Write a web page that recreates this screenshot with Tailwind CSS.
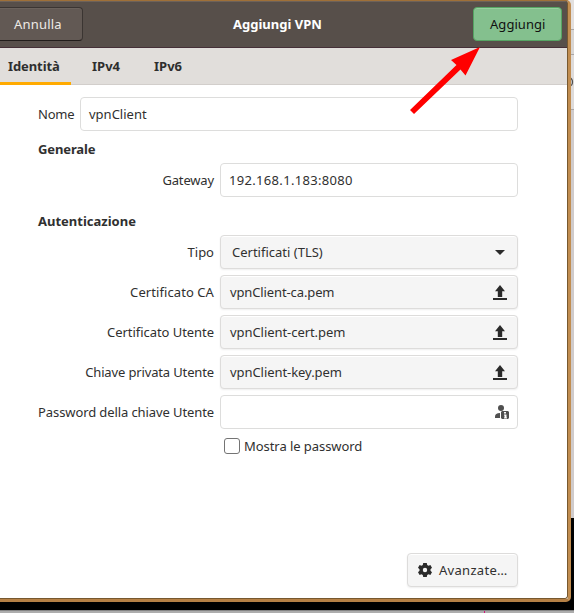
<!DOCTYPE html>
<html lang="it">
<head>
<meta charset="utf-8">
<title>Aggiungi VPN</title>
<script src="https://cdn.jsdelivr.net/npm/@tailwindcss/browser@4"></script>
</head>
<body class="relative h-[613px] w-[574px] overflow-hidden bg-black font-['Noto_Sans',sans-serif] text-[13px] leading-[18px] text-[#303030]">
<!-- desktop behind the dialog -->
<div class="absolute top-0 right-0 h-[518px] w-[8px] overflow-hidden bg-[#d0cbcb]">
  <div class="h-[30px] border-b border-[#aaa6a5] bg-[#e3e0df]"></div>
  <div class="h-[25px] border-b border-[#aaa6a5] bg-[#d9d6d4]"></div>
  <div class="h-[55px] border-b border-[#aaa6a5] bg-[#dedbda]"></div>
  <svg class="absolute top-[77px] left-0" width="8" height="10"><ellipse cx="3.500" cy="5" rx="3" ry="4" fill="none" stroke="#505050" stroke-width="1.300"/></svg>
</div>
<div class="absolute bottom-0 left-0 h-[3px] w-full border-t border-[#858585] bg-[#adadad]"><div class="ml-[484px] h-[2px] w-px bg-[#d4147a]"></div></div>

<main class="relative flex h-[602px] w-[571px] flex-col overflow-hidden rounded-r-[5px] border-t border-r-[3px] border-b-[3px] border-t-[#9f7038] border-r-[#c18d50] border-b-[#b58045] bg-white">
  <div class="pointer-events-none absolute inset-0 z-10 rounded-r-[3px] border-r border-b border-[#77582f]"></div>
  <header class="flex h-[47px] shrink-0 items-start border-t border-b border-t-[#6d625a] border-b-[#453038] bg-[#574f4a] pt-[5px]">
    <button class="h-[34px] w-[83px] rounded-r-[4px] border border-l-0 border-[#3b3532] border-b-[#211d1b] bg-[#625954] pl-[14px] text-left text-[#eeeae6] shadow-[inset_0_1px_#6b625c]"><span class="tracking-[0.2px]">Annulla</span></button>
    <h1 class="ml-[150px] w-[240px] pt-[8px] font-bold whitespace-nowrap text-white"><span>Aggiungi VPN</span></h1>
    <button class="h-[34px] w-[89px] rounded-[4px] border border-[#55a463] bg-[#84c08e] pl-[16px] text-left text-[#111] shadow-[inset_0_1px_#98ce9f]"><span class="tracking-[0.050px]">Aggiungi</span></button>
  </header>
  <nav class="flex h-[37px] shrink-0 border-b border-[#d2cecb] bg-[#e1dedb] font-bold text-[#2e2e2e]">
    <div class="-mb-px h-[37px] w-[71px] border-b-[3px] border-[#ffaa00] pt-[9px] pl-[8px]"><span class="tracking-[-0.1px]">Identità</span></div>
    <div class="w-[62px] pt-[9px] pl-[21px]"><span>IPv4</span></div>
    <div class="pt-[9px] pl-[21px]"><span>IPv6</span></div>
  </nav>
  <section class="flex flex-1 flex-col pt-[12px] pl-[38px]">
    <div class="flex h-[34px] items-center"><label class="w-[42px]"><span class="tracking-[-0.25px]">Nome</span></label><div class="flex h-[34px] w-[438px] items-center rounded-[4px] border border-[#dddddc] pl-[8px]"><span>vpnClient</span></div></div>
    <h2 class="mt-[9px] h-[18px] font-bold"><span class="tracking-[-0.12px]">Generale</span></h2>
    <div class="mt-[5px] flex h-[34px] items-center"><label class="w-[176px] text-right whitespace-nowrap"><span class="tracking-[-0.15px]">Gateway</span></label><div class="ml-[6px] flex h-[34px] w-[298px] items-center rounded-[4px] border border-[#dddddc] pl-[8px]"><span class="tracking-[0.32px]">192.168.1.183:8080</span></div></div>
    <h2 class="mt-[15px] h-[18px] font-bold"><span>Autenticazione</span></h2>
    <div class="mt-[5px] flex flex-col gap-[6px]">
      <div class="flex h-[34px] items-center"><label class="w-[176px] text-right whitespace-nowrap"><span>Tipo</span></label><div class="ml-[6px] flex h-[34px] w-[298px] items-center justify-between rounded-[4px] border border-[#dddcdb] bg-[#f5f5f5] pr-[9px] pl-[11px] shadow-[0_1px_2px_#00000012,inset_0_1px_white]"><span>Certificati (TLS)</span><svg width="16" height="16"><path d="M3 6h10l-5 5z" fill="#2b2b2b"/></svg></div></div>
      <div class="flex h-[34px] items-center"><label class="w-[176px] text-right whitespace-nowrap"><span class="tracking-[0.08px]">Certificato CA</span></label><div class="ml-[6px] flex h-[34px] w-[298px] items-center justify-between rounded-[4px] border border-[#dddcdb] bg-[#f5f5f5] pr-[9px] pl-[9px] shadow-[0_1px_2px_#00000012,inset_0_1px_white]"><span class="tracking-[-0.12px]">vpnClient-ca.pem</span><svg width="16" height="16"><path d="M8 1l5 6.200H10.200V13H5.800V7.200H3zM1 14h14v2H1z" fill="#2b2b2b"/></svg></div></div>
      <div class="flex h-[34px] items-center"><label class="w-[176px] text-right whitespace-nowrap"><span class="tracking-[-0.05px]">Certificato Utente</span></label><div class="ml-[6px] flex h-[34px] w-[298px] items-center justify-between rounded-[4px] border border-[#dddcdb] bg-[#f5f5f5] pr-[9px] pl-[9px] shadow-[0_1px_2px_#00000012,inset_0_1px_white]"><span class="tracking-[-0.06px]">vpnClient-cert.pem</span><svg width="16" height="16"><path d="M8 1l5 6.200H10.200V13H5.800V7.200H3zM1 14h14v2H1z" fill="#2b2b2b"/></svg></div></div>
      <div class="flex h-[34px] items-center"><label class="w-[176px] text-right whitespace-nowrap"><span class="tracking-[-0.14px]">Chiave privata Utente</span></label><div class="ml-[6px] flex h-[34px] w-[298px] items-center justify-between rounded-[4px] border border-[#dddcdb] bg-[#f5f5f5] pr-[9px] pl-[9px] shadow-[0_1px_2px_#00000012,inset_0_1px_white]"><span class="tracking-[-0.06px]">vpnClient-key.pem</span><svg width="16" height="16"><path d="M8 1l5 6.200H10.200V13H5.800V7.200H3zM1 14h14v2H1z" fill="#2b2b2b"/></svg></div></div>
      <div class="flex h-[34px] items-center"><label class="w-[176px] text-right whitespace-nowrap"><span class="tracking-[-0.1px]">Password della chiave Utente</span></label><div class="ml-[6px] flex h-[34px] w-[298px] items-center justify-end rounded-[4px] border border-[#dddddc] pr-[7px]"><svg width="16" height="16" fill="#505050"><circle cx="7" cy="4" r="3"/><path d="M1 14v-1.500Q1 9 6 9v5z"/><path fill-rule="evenodd" d="M8 7h6l1 1v6l-1 1H8l-1-1V8zM10 8v1.500h2V8zM10 10.500v1h.5v2H10v1h3v-1h-.5v-3z"/></svg></div></div>
    </div>
    <label class="mt-[8px] ml-[186px] flex h-[18px] items-center"><i class="mr-[4px] h-[16px] w-[16px] rounded-[3px] border border-[#747474] bg-white"></i><span class="tracking-[-0.06px]">Mostra le password</span></label>
    <button class="mt-[98px] ml-[369px] flex h-[34px] w-[111px] items-center rounded-[4px] border border-[#dddcdb] bg-[#f5f5f5] pl-[9px] shadow-[0_1px_2px_#00000012,inset_0_1px_white]"><svg class="mr-[6px]" width="16" height="16" viewBox="0 0 16 16"><path fill-rule="evenodd" d="M6.200 1h3.600l.4 2 1.300.8 1.900-.7 1.600 2.700L13.500 7.200v1.600l1.500 1.400-1.600 2.700-1.900-.7-1.300.8-.4 2H6.200l-.4-2-1.300-.8-1.900.7L1 10.200l1.500-1.400V7.200L1 5.800l1.600-2.700 1.900.7L5.800 3zM8 5.800a2.200 2.200 0 100 4.400A2.200 2.200 0 008 5.800z" fill="#2b2b2b"/></svg><span class="tracking-[0.3px]">Avanzate…</span></button>
  </section>
</main>
<svg class="pointer-events-none absolute top-0 left-0" width="574" height="613"><path d="M480 47L465.500 75.500 460.500 69.500 414 114 410 110 456.500 65 451 60z" fill="#f00"/></svg>
</body>
</html>
